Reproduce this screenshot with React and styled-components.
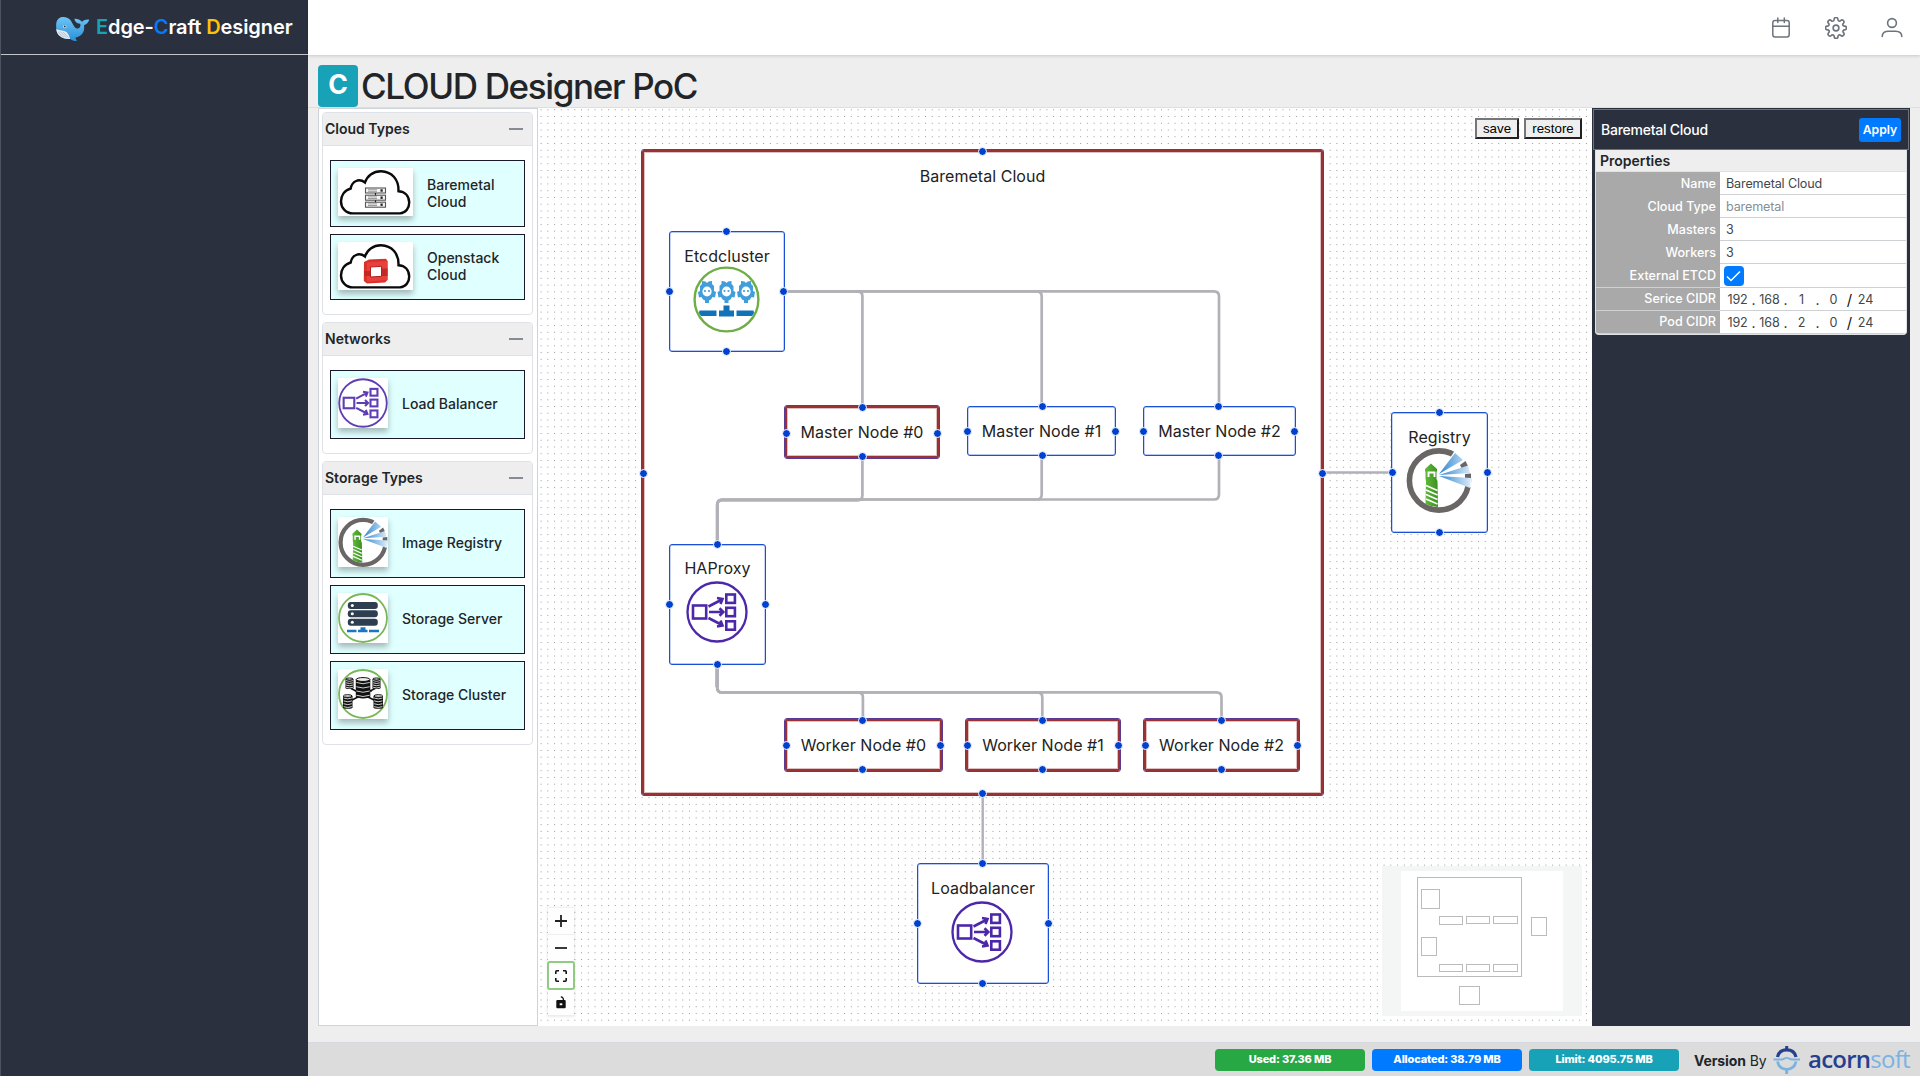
import React from "react";
import styled, { createGlobalStyle } from "styled-components";

const GlobalStyle = createGlobalStyle`
  *, *::before, *::after { box-sizing: border-box; }
  body { margin: 0; background: #eeeeee; color: #212529; font-family: Inter, "Liberation Sans", sans-serif; }
  button { font: inherit; margin: 0; padding: 0; border: 0; cursor: pointer; }
  svg { display: block; }
`;

/* ---------- shell ---------- */

const Shell = styled.div`
  display: grid;
  grid-template-columns: 308px 1fr;
  width: 1920px;
  height: 1076px;
  overflow: hidden;
`;
const Sidebar = styled.aside`
  background: #2a303d;
  border-left: 1px solid #4d535e;
`;
const Brand = styled.div`
  display: flex;
  align-items: center;
  height: 55px;
  padding: 2px 0 0 54px;
  gap: 6px;
  border-bottom: 1px solid #c4c6ca;
`;
const BrandName = styled.div`
  margin-top: -2px;
  color: #fff;
  font-size: 20px;
  font-weight: 600;
  line-height: 24px;
  letter-spacing: -0.1px;
  white-space: nowrap;
`;
const Accent = styled.span`
  color: ${(p) => p.$c};
`;
const Main = styled.div`
  display: flex;
  flex-direction: column;
  min-width: 0;
  background: #eeeeee;
`;
const TopBar = styled.header`
  flex: none;
  height: 55px;
  background: #fff;
  display: flex;
  align-items: center;
  justify-content: flex-end;
  gap: 34px;
  padding: 0 17px 0 0;
  color: #6c757d;
  box-shadow: 0 1px 3px rgba(0, 0, 0, 0.16);
`;
const TitleRow = styled.div`
  flex: none;
  display: flex;
  height: 53px;
  padding: 10px 0 0 10px;
  gap: 3px;
  border-bottom: 1px solid #dcdfe2;
`;
const TitleBadge = styled.span`
  width: 40px;
  height: 42px;
  border-radius: 4px;
  background: #17a2b8;
  color: #fff;
  font-size: 26.5px;
  font-weight: 700;
  line-height: 38px;
  text-align: center;
`;
const Title = styled.h1`
  margin: 0;
  font-size: 35px;
  font-weight: 500;
  line-height: 43px;
  letter-spacing: -1.35px;
  white-space: nowrap;
`;
const Workspace = styled.div`
  flex: none;
  display: grid;
  grid-template-columns: 220px 1054px 318px;
  height: 918px;
  margin: 0 10px;
`;

/* ---------- palette ---------- */

const Palette = styled.div`
  background: #fff;
  border: 1px solid #ced4da;
  padding: 3px;
  display: flex;
  flex-direction: column;
  gap: 7px;
`;
const Group = styled.section`
  width: 211px;
  border: 1px solid #dee2e6;
  border-radius: 4px;
  overflow: hidden;
`;
const GroupHead = styled.div`
  display: flex;
  align-items: center;
  justify-content: space-between;
  height: 33px;
  padding: 0 9px 1px 2px;
  background: #eeeeee;
  border-bottom: 1px solid #dee2e6;
  font-size: 14px;
  font-weight: 600;
`;
const Collapse = styled.span`
  width: 14px;
  height: 2px;
  background: #868c92;
`;
const GroupBody = styled.div`
  display: flex;
  flex-direction: column;
  gap: 7px;
  padding: 14px 7px ${(p) => p.$bottom}px;
`;
const Item = styled.div`
  display: flex;
  align-items: center;
  height: ${(p) => p.$h}px;
  border: 1px solid #1a192b;
  background: #e0ffff;
  padding: 0 20px 0 7px;
`;
const Thumb = styled.div`
  flex: none;
  width: ${(p) => (p.$wide ? 75 : 50)}px;
  height: ${(p) => (p.$wide ? 48 : 50)}px;
  margin: 0 14px 3px 0;
  background: #fff;
  box-shadow: 0 4px 6px rgba(0, 0, 0, 0.28);
`;
const ItemLabel = styled.span`
  width: ${(p) => (p.$wide ? "80px" : "auto")};
  margin-bottom: 2px;
  white-space: ${(p) => (p.$wide ? "normal" : "nowrap")};
  font-size: 14px;
  font-weight: 500;
  line-height: 17px;
  letter-spacing: 0;
`;

/* ---------- canvas ---------- */

const Canvas = styled.div`
  position: relative;
  overflow: hidden;
  background: #fff;
`;
const Dots = styled.svg`
  position: absolute;
  inset: 0;
`;
const Viewport = styled.div`
  position: absolute;
  left: 0;
  top: 0;
  transform: translate(-538px, -108px);
`;
const Edges = styled.svg`
  position: absolute;
  left: 0;
  top: 0;
  fill: none;
  stroke: #b1b1b7;
`;
const Node = styled.div`
  position: absolute;
  left: ${(p) => p.$x}px;
  top: ${(p) => p.$y}px;
  width: ${(p) => p.$w}px;
  height: ${(p) => p.$h}px;
  background: ${(p) => (p.$clear ? "transparent" : "#fff")};
  border: 1px solid ${(p) => (p.$red ? "#5a3a96" : "#1a50d6")};
  border-radius: 3px;
  box-shadow: ${(p) => (p.$red ? "inset 0 0 0 2px #993333, inset 0 0 0 3px #dfc0c0" : "inset 0 0 0 0.4px #6f90e4")};
  display: flex;
  flex-direction: column;
  align-items: center;
  padding-top: ${(p) => p.$pad}px;
`;
const NodeLabel = styled.div`
  font-size: 16px;
  line-height: 20px;
  letter-spacing: 0.05px;
  color: #222;
  white-space: nowrap;
`;
const NodeIcon = styled.div`
  margin: ${(p) => p.$gap}px 1.5px 0 0;
`;
const Port = styled.i`
  position: absolute;
  left: ${(p) => p.$x - 4.5}px;
  top: ${(p) => p.$y - 4.5}px;
  width: 9px;
  height: 9px;
  border: 1px solid #fff;
  border-radius: 50%;
  background: #0041d0;
`;
const Actions = styled.div`
  position: absolute;
  top: 10px;
  right: 10px;
  display: flex;
  gap: 5px;
`;
const NativeButton = styled.button`
  && {
    height: 21px;
    width: ${(p) => p.$w}px;
    border: 2px solid;
    border-color: #767676 #212121 #212121 #767676;
    background: #efefef;
    color: #000;
    font: 13.33px/15px "Liberation Sans", sans-serif;
  }
`;
const Controls = styled.div`
  position: absolute;
  left: 10px;
  bottom: 10px;
  width: 26px;
  box-shadow: 0 0 2px 1px rgba(0, 0, 0, 0.08);
`;
const ControlButton = styled.button`
  && {
    display: flex;
    align-items: center;
    justify-content: center;
    width: 26px;
    height: 27px;
    background: #fefefe;
    border-bottom: 1px solid #eee;
  }
  &&[data-focus="true"] {
    position: relative;
    width: 28px;
    height: 29px;
    margin: -1px;
    border: 2px solid #92ca82;
    border-radius: 3px;
  }
`;
const MiniMap = styled.div`
  position: absolute;
  right: 10px;
  bottom: 10px;
  background: #fff;
`;

/* ---------- properties ---------- */

const Inspector = styled.aside`
  background: #2a303d;
  padding: 1px;
`;
const InspectorHead = styled.div`
  display: flex;
  align-items: center;
  justify-content: space-between;
  height: 41px;
  border: 1px solid #6f7278;
  padding: 0 7px 0 7px;
  color: #fff;
  font-size: 14px;
  font-weight: 500;
  letter-spacing: -0.25px;
`;
const Apply = styled.button`
  && {
    width: 42px;
    height: 24px;
    border-radius: 3px;
    background: #007bff;
    color: #fff;
    font-size: 12.2px;
    font-weight: 600;
  }
`;
const PropCard = styled.div`
  margin: 0 2px;
  height: 185px;
  border: 1px solid #dee2e6;
  border-top: 0;
  border-radius: 0 0 4px 4px;
  background: #fff;
  overflow: hidden;
`;
const PropTitle = styled.div`
  height: 22px;
  padding-left: 4px;
  background: #eeeeee;
  border-bottom: 1px solid #dee2e6;
  font-size: 14px;
  font-weight: 600;
  line-height: 22px;
`;
const PropRow = styled.div`
  display: grid;
  grid-template-columns: 124px 1fr;
  height: ${(p) => p.$h}px;
  border-bottom: 1px solid #ced1d4;
  font-size: 12.6px;
  line-height: ${(p) => p.$line ?? 23}px;
`;
const PropName = styled.div`
  padding-right: 4px;
  background: #a9a9a9;
  color: #fff;
  font-weight: 500;
  text-align: right;
`;
const PropValue = styled.div`
  padding-left: ${(p) => p.$left ?? 6}px;
  color: ${(p) => (p.$muted ? "#868e96" : "#41474d")};
  letter-spacing: -0.15px;
  display: flex;
  align-items: center;
`;
const Check = styled.span`
  width: 20px;
  height: 20px;
  border-radius: 4px;
  background: #007bff;
`;
const Octet = styled.span`
  width: ${(p) => p.$w}px;
  text-align: center;
`;
const Sep = styled.span`
  width: 11px;
  text-align: center;
  color: #111;
  font-size: ${(p) => (p.$slash ? 15 : 14)}px;
`;

/* ---------- footer ---------- */

const Footer = styled.footer`
  flex: none;
  margin-top: 16px;
  height: 34px;
  background: #dcdcdc;
  border-top: 1px solid #d6d9e0;
  display: flex;
  align-items: center;
  justify-content: flex-end;
  gap: 7px;
  padding-right: 20px;
`;
const Stat = styled.span`
  width: 150px;
  height: 22px;
  border-radius: 4px;
  background: ${(p) => p.$c};
  color: #fff;
  font-size: 11px;
  font-weight: 800;
  line-height: 21px;
  text-align: center;
  letter-spacing: -0.15px;
`;
const Version = styled.span`
  margin: 2px 0 0 8px;
  width: 72px;
  font-size: 14px;
  letter-spacing: -0.1px;
  white-space: nowrap;
`;
const Acorn = styled.span`
  display: flex;
  align-items: center;
  gap: 7px;
  height: 32px;
`;
const AcornName = styled.span`
  width: 92px;
  font: 600 24px/28px "Open Sans", sans-serif;
  letter-spacing: -0.75px;
  color: #25408f;
  white-space: nowrap;
  margin-top: -2px;
`;
const Light = styled.span`
  font-weight: 400;
  color: #7ab2e2;
`;

/* ---------- drawings ---------- */

const Whale = () => (
  <svg width="35" height="25" viewBox="0 0 36 26">
    <defs>
      <linearGradient id="wh" x1="0" y1="0" x2="0" y2="1">
        <stop offset="0" stopColor="#6cc5f5" />
        <stop offset="1" stopColor="#2b8fd6" />
      </linearGradient>
    </defs>
    <path d="M1 8C2 1 8 0 13 2C18 4 18.500 12 22.500 13C25.500 13 27 10.500 26 8C23 8 20.500 6 20 3C23 2.800 26 4 28 6C30 3.800 33 3.200 35.500 3.800C34.500 7 32 9 30 9.500C31 16 28 21 21 22.500L22.500 26C19.500 26 17 25 15.500 23.800C8 25 0 20 1 8Z" fill="url(#wh)" />
    <path d="M1 13.500C5 15.500 9 14.500 12 17C14 19 15 21.500 15.500 23.800C8 24.500 1.500 20.500 1 13.500Z" fill="#e3eaf0" />
    <path d="M3 16.500L9 22.500M5 16L11.500 22.500M8 16.500L14 22.500" stroke="#a7b6c2" strokeWidth=".8" />
    <circle cx="10" cy="11" r="1.700" fill="#eef" />
    <circle cx="10" cy="11" r="1" fill="#2a303d" />
  </svg>
);

const CalendarIcon = () => (
  <svg width="20" height="22" viewBox="0 0 20 22" fill="none" stroke="currentColor" strokeWidth="1.500" strokeLinecap="round">
    <rect x="1.800" y="3.600" width="16.400" height="16.400" rx="2.200" />
    <path d="M1.800 9.200H18.200M6.800 1V5.600M13.300 1V5.600" />
  </svg>
);
const GearIcon = () => (
  <svg width="22" height="22" viewBox="0.500 0.500 23 23" fill="none" stroke="currentColor" strokeWidth="1.700" strokeLinejoin="round">
    <circle cx="12" cy="12" r="3" />
    <path d="M19.400 15a1.650 1.650 0 0 0 .33 1.820l.06.06a2 2 0 0 1-2.830 2.830l-.06-.06a1.650 1.650 0 0 0-2.820 1.170V21a2 2 0 0 1-4 0v-.09a1.650 1.650 0 0 0-2.900-1.180l-.06.06a2 2 0 0 1-2.830-2.830l.06-.06A1.650 1.650 0 0 0 3.170 14H3a2 2 0 0 1 0-4h.09A1.650 1.650 0 0 0 4.270 7.180l-.06-.06a2 2 0 0 1 2.830-2.830l.06.06A1.650 1.650 0 0 0 10 3.170V3a2 2 0 0 1 4 0v.09a1.650 1.650 0 0 0 2.820 1.170l.06-.06a2 2 0 0 1 2.830 2.830l-.06.06A1.650 1.650 0 0 0 20.830 10H21a2 2 0 0 1 0 4h-.09a1.650 1.650 0 0 0-1.510 1z" />
  </svg>
);
const UserIcon = () => (
  <svg width="22" height="22" viewBox="0 0 22 22" fill="none" stroke="currentColor" strokeWidth="1.600" strokeLinecap="round">
    <circle cx="11" cy="6" r="4.400" />
    <path d="M1.200 19.500C1.200 15.500 4 14.200 7.500 14.200H14.500C18 14.200 20.800 15.500 20.800 19.500" />
  </svg>
);

const CloudShape = () => (
  <path d="M15 45.400H62C68 45 71.200 40 71.200 34.500C71 28 67 23.500 60.500 23.200C61 12 54 3.400 43 3.200C35 3.200 29 8 27 14.500C21 10 14 13 12.700 20.500C6 22.500 3 28 3 33.500C3 40 8 45.400 15 45.400Z" fill="#fff" stroke="#0a0a0a" strokeWidth="2.400" />
);
const BaremetalArt = () => (
  <svg width="75" height="48" viewBox="0 0 75 48">
    <CloudShape />
    {[20, 27.200, 34.200].map((y) => (
      <g key={y}>
        <rect x="27.500" y={y} width="20" height="5" fill="#f4f4f4" stroke="#555" strokeWidth="1.100" />
        <path d={`M30 ${y + 1.700}H39M30 ${y + 3.300}H39`} stroke="#888" strokeWidth=".8" />
        <rect x="42.500" y={y + 1.300} width="2.200" height="2.400" fill="#222" />
      </g>
    ))}
    <path d="M37.500 25V27.200M37.500 32.200V34.200" stroke="#222" strokeWidth="1.200" />
  </svg>
);
const OpenstackArt = () => (
  <svg width="75" height="48" viewBox="0 0 75 48">
    <CloudShape />
    <path d="M26 20L31 17.500L48 16.800L49.500 19V38L47 40.500L29 41.500L25.800 39Z" fill="#d9322b" />
    <path d="M29 20.500L49.500 19V38L29 39.500Z" fill="#e8403c" />
    <path d="M26 29H32V34H26ZM44 26.500H49.500V34H44Z" fill="#c42822" />
    <path d="M32.500 25L43.500 24.300V34.300L32.500 35Z" fill="#fff" stroke="#b3201b" strokeWidth="1" />
  </svg>
);

const BalancerArt = ({ size, stroke = "#4d27aa" }) => (
  <svg width={size} height={size} viewBox="0 0 62 62" fill="none" stroke={stroke} strokeWidth="2.600">
    <circle cx="31" cy="31" r="29.500" strokeWidth="2.300" />
    <rect x="7" y="24.500" width="13.200" height="13" />
    <rect x="40.300" y="13.500" width="8.600" height="8.400" />
    <rect x="40.300" y="26.800" width="8.600" height="8.400" />
    <rect x="40.300" y="40.300" width="8.600" height="8.400" />
    <path d="M23 31H37M22.500 25.500L36 18.500M22.500 37L36 44M33.500 27.300L37.300 31L33.500 34.700M31 17L36.500 18L34.500 23M31 45.500L36.500 44.500L34.500 39.500" />
  </svg>
);
const RegistryArt = ({ size, id }) => (
  <svg width={size} height={size} viewBox="0 0 66 66">
    <defs>
      <linearGradient id={`beam${id}`} x1="0" x2="1">
        <stop offset="0" stopColor="#2f86d0" />
        <stop offset="1" stopColor="#dcecf9" />
      </linearGradient>
      <linearGradient id={`tower${id}`} x1="0" x2="1">
        <stop offset="0" stopColor="#62bb3a" />
        <stop offset="1" stopColor="#3b8f22" />
      </linearGradient>
    </defs>
    <circle cx="33" cy="33.500" r="29.600" fill="#fff" stroke="#6b6666" strokeWidth="5.600" />
    <path d="M33 27L50 2L64 4L66 41Z" fill="#fff" />
    <path d="M54 18L59.500 14L62 19L56 22ZM59 27L65 26.500V31.500L59 31.500Z" fill="#6b6666" />
    <path d="M33 27L49 6L57 13ZM33 28L62 18.500L64 26ZM33 29L65 31L64 41Z" fill={`url(#beam${id})`} />
    <path d="M25 16.500L31 22V24.500H30.500V32L31.500 34L32 60Q26 60 19.500 57L20 34L19.500 32V24.500H19V22Z" fill={`url(#tower${id})`} />
    <path d="M22.500 30V25.500H28.500V30" fill="none" stroke="#fff" strokeWidth="1.900" />
    <path d="M20 38.500L31.500 43.500M20 43L31.500 48M20 47.500L31.500 52.500M20 52L31.500 57" stroke="#fff" strokeWidth="1.500" />
  </svg>
);
const Ring = () => <circle cx="25" cy="25" r="24" fill="#fff" stroke="#78b858" strokeWidth="1.800" />;
const ServerArt = () => (
  <svg width="50" height="50" viewBox="0 0 50 50">
    <Ring />
    {[9, 17.300, 25.800].map((y) => (
      <g key={y}>
        <rect x="9.800" y={y} width="30" height="6.900" rx="3" fill="#2d3e50" />
        <circle cx="14.300" cy={y + 3.400} r="1.500" fill="#fff" />
      </g>
    ))}
    <path d="M9 38H18.500M31 38H41M20 38H29.500M25 35V38" stroke="#1b76c0" strokeWidth="2.700" />
    <rect x="22.500" y="34.300" width="5" height="4" fill="#1b76c0" />
  </svg>
);
const Drum = ({ x, y, w, h, n }) => {
  const step = h / n;
  return (
    <g>
      <rect x={x} y={y} width={w} height={h} fill="#111" />
      <ellipse cx={x + w / 2} cy={y + h} rx={w / 2} ry={step / 2.200} fill="#111" />
      {Array.from({ length: n }, (_, i) => (
        <path key={i} d={`M${x + 0.6} ${y + step * (i + 0.7)}Q${x + w / 2} ${y + step * (i + 1.3)} ${x + w - 0.6} ${y + step * (i + 0.7)}`} stroke="#fff" strokeWidth=".8" fill="none" />
      ))}
      <ellipse cx={x + w / 2} cy={y} rx={w / 2 - 0.4} ry={step / 2.200} fill="#eee" stroke="#111" strokeWidth="1" />
    </g>
  );
};
const ClusterArt = () => (
  <svg width="50" height="50" viewBox="0 0 50 50">
    <Ring />
    <path d="M12 19L38 32M38 19L12 32M17 22L25 20L34 22" stroke="#111" strokeWidth="1.400" />
    <Drum x={7.500} y={10} w={8} h={9} n={4} />
    <Drum x={34.500} y={10} w={8} h={9} n={4} />
    <Drum x={17.800} y={10.500} w={14.500} h={17} n={4} />
    <Drum x={5} y={27} w={9.500} h={11.500} n={4} />
    <Drum x={35.500} y={27} w={9.500} h={11.500} n={4} />
  </svg>
);
const EtcdArt = () => (
  <svg width="67" height="67" viewBox="0 0 67 67">
    <circle cx="33.500" cy="33.500" r="31.900" fill="#fff" stroke="#6fae45" strokeWidth="2.400" />
    {[14, 33.500, 53].map((x) => (
      <g key={x}>
        <path d={`M${x - 5} 15L${x - 1.500} 15.500L${x} 17L${x + 1.500} 15.500L${x + 5} 15L${x + 5} 18L${x + 7} 20V25L${x + 9} 26L${x + 8} 31.500L${x + 5.500} 31L${x + 4} 33.500L${x + 2} 34.500V37H${x - 2}V34.500L${x - 4} 33.500L${x - 5.500} 31L${x - 8} 31.500L${x - 9} 26L${x - 7} 25V20L${x - 5} 18Z`} fill="#419eda" />
        <ellipse cx={x} cy="25.500" rx="4.600" ry="5.100" fill="#fff" />
        <circle cx={x - 2} cy="25" r="1.100" fill="#419eda" />
        <circle cx={x + 2} cy="25" r="1.100" fill="#419eda" />
      </g>
    ))}
    <path d="M6.500 44.500H23.500V50H8L6 47ZM43.500 44.500H60.500L61 47L59 50H43.500ZM26 44.500H30.500V39.500H36.500V44.500H41V50.500H26Z" fill="#1272b8" />
  </svg>
);
const AcornLogo = () => (
  <svg width="28" height="30" viewBox="0 0 28 30" fill="none">
    <path d="M13.700 1V4.500" stroke="#25408f" strokeWidth="3" />
    <path d="M4.500 12C5.500 7.500 9 4.800 13.700 4.800C18.500 4.800 22 7.500 23 12" stroke="#25408f" strokeWidth="3.200" />
    <path d="M.5 14.500H8.500C11 14.500 11.500 12.800 13.700 12.800C16 12.800 16.500 14.500 19 14.500H27" stroke="#7ab2e2" strokeWidth="1.800" />
    <path d="M4.500 16.500C5.500 21.500 9 24.300 13.700 24.300C18.500 24.300 22 21.500 23 16.500" stroke="#7ab2e2" strokeWidth="2.800" />
    <path d="M13.700 24V29" stroke="#7ab2e2" strokeWidth="3" />
  </svg>
);

/* ---------- data ---------- */

const PALETTE = [
  {
    title: "Cloud Types",
    bottom: 14,
    items: [
      { label: "Baremetal Cloud", wide: true, h: 67, art: <BaremetalArt /> },
      { label: "Openstack Cloud", wide: true, h: 66, art: <OpenstackArt /> },
    ],
  },
  { title: "Networks", bottom: 14, items: [{ label: "Load Balancer", h: 69, art: <BalancerArt size={50} stroke="#5f3db5" /> }] },
  {
    title: "Storage Types",
    bottom: 14,
    items: [
      { label: "Image Registry", h: 69, art: <RegistryArt size={50} id="p" /> },
      { label: "Storage Server", h: 69, art: <ServerArt /> },
      { label: "Storage Cluster", h: 69, art: <ClusterArt /> },
    ],
  },
];

const NODES = [
  { label: "Baremetal Cloud", x: 641, y: 149, w: 683, h: 647, pad: 16, red: true, clear: true },
  { label: "Etcdcluster", x: 669, y: 231, w: 116, h: 121, pad: 14, gap: 0, art: <EtcdArt /> },
  { label: "Master Node #0", x: 784, y: 405, w: 156, h: 54, pad: 16, red: true },
  { label: "Master Node #1", x: 967, y: 406, w: 149, h: 50, pad: 14 },
  { label: "Master Node #2", x: 1143, y: 406, w: 153, h: 50, pad: 14 },
  { label: "HAProxy", x: 669, y: 544, w: 97, h: 121, pad: 13, gap: 3, art: <BalancerArt size={62} /> },
  { label: "Worker Node #0", x: 784, y: 718, w: 159, h: 54, pad: 16, red: true },
  { label: "Worker Node #1", x: 965, y: 718, w: 156, h: 54, pad: 16, red: true },
  { label: "Worker Node #2", x: 1143, y: 718, w: 157, h: 54, pad: 16, red: true },
  { label: "Registry", x: 1391, y: 412, w: 97, h: 121, pad: 14, gap: 0, art: <RegistryArt size={66} id="n" /> },
  { label: "Loadbalancer", x: 917, y: 863, w: 132, h: 121, pad: 14, gap: 3, art: <BalancerArt size={62} /> },
];

const PORTS = [
  [982.7, 151.7], [643.6, 473.3], [1322, 473.3], [982.7, 793.5],
  [726.5, 231.3], [669.3, 291.3], [783.8, 291.3], [726.5, 351.3],
  [862.5, 407.8], [786.5, 433], [937.5, 433], [862.5, 456.6],
  [1042, 406.5], [967.2, 431.6], [1115.5, 431.6], [1042, 455.2],
  [1218.6, 406.5], [1143.8, 431.6], [1294.8, 431.6], [1218.6, 455.2],
  [717.2, 544], [669.2, 604], [765, 604], [717.2, 664],
  [862.7, 720.5], [786.6, 745.6], [940.2, 745.6], [862.7, 769.3],
  [1042, 720.5], [967, 745.6], [1118.2, 745.6], [1042, 769.3],
  [1221.3, 720.5], [1145.2, 745.6], [1297.5, 745.6], [1221.3, 769.3],
  [1439.8, 412.6], [1392, 472.6], [1487.6, 472.6], [1439.8, 532.6],
  [982.9, 863.6], [917.3, 923.6], [1048, 923.6], [982.9, 983.7],
];

const MASTER_X = [862.4, 1041.7, 1219];
const WORKER_X = [862.9, 1042.3, 1221.5];

const MINI = [
  [417.5, 877.5, 104, 99], [421.5, 889.5, 18, 19], [439.5, 916.5, 23, 8], [466.5, 916.5, 23, 7], [493.5, 916.5, 24, 7],
  [421.5, 937.5, 15, 18], [439.5, 964.5, 23, 7], [466.5, 964.5, 23, 7], [493.5, 964.5, 24, 7], [531.5, 917.5, 15, 18], [459.5, 986.5, 20, 18],
];

const PROPS = [
  { name: "Name", value: "Baremetal Cloud", h: 23 },
  { name: "Cloud Type", value: "baremetal", muted: true, h: 23 },
  { name: "Masters", value: "3", h: 23 },
  { name: "Workers", value: "3", h: 23 },
  { name: "External ETCD", check: true, h: 24 },
  { name: "Serice CIDR", cidr: [192, 168, 1, 0, 24], h: 23, line: 21 },
  { name: "Pod CIDR", cidr: [192, 168, 2, 0, 24], h: 23, line: 21 },
];

const Cidr = ({ v }) => (
  <>
    <Octet $w={21}>{v[0]}</Octet><Sep>.</Sep>
    <Octet $w={21}>{v[1]}</Octet><Sep>.</Sep>
    <Octet $w={21}>{v[2]}</Octet><Sep>.</Sep>
    <Octet $w={21}>{v[3]}</Octet><Sep $slash>/</Sep>
    <Octet $w={21}>{v[4]}</Octet>
  </>
);

const Flow = () => (
  <Canvas>
    <Dots width="1054" height="918">
      <pattern id="grid" x="-0.3" y="-1.600" width="6.744" height="6.744" patternUnits="userSpaceOnUse">
        <circle cx="3.400" cy="3.400" r=".55" fill="#81818a" />
      </pattern>
      <rect width="1054" height="918" fill="url(#grid)" />
      <rect x="103.500" y="41.500" width="682" height="646" rx="3" fill="#fff" />
    </Dots>
    <Viewport>
      <Edges width="1920" height="1076">
        <g strokeWidth="2.700">
          {MASTER_X.map((x) => (
            <path key={x} d={`M784 291.300H${x - 5}Q${x} 291.300 ${x} 296.300V406`} />
          ))}
          {MASTER_X.slice(1).map((x) => (
            <path key={x} d={`M${x} 456V494.500Q${x} 499.500 ${x - 5} 499.500H722.500Q717.500 499.500 717.500 504.500V544`} />
          ))}
          <path d="M862.400 458V495.300Q862.400 500.300 857.400 500.300H722Q717 500.300 717 505.300V544" />
          {WORKER_X.map((x) => (
            <path key={x} d={`M717.200 664V687.400Q717.200 692.400 722.200 692.400H${x - 5}Q${x} 692.400 ${x} 697.400V719`} />
          ))}
          <path d="M717 664V687" strokeWidth="3.500" />
          <path d="M1322 472.500H1392M982.700 793V864" strokeWidth="2.400" />
        </g>
      </Edges>
      {NODES.map((n) => (
        <Node key={n.label + n.x} $x={n.x} $y={n.y} $w={n.w} $h={n.h} $pad={n.pad} $red={n.red} $clear={n.clear}>
          <NodeLabel>{n.label}</NodeLabel>
          {n.art && <NodeIcon $gap={n.gap}>{n.art}</NodeIcon>}
        </Node>
      ))}
      {PORTS.map(([x, y]) => (
        <Port key={`${x}-${y}`} $x={x} $y={y} />
      ))}
    </Viewport>
    <Actions>
      <NativeButton $w={44}>save</NativeButton>
      <NativeButton $w={58}>restore</NativeButton>
    </Actions>
    <Controls>
      <ControlButton>
        <svg width="12" height="12" viewBox="0 0 12 12"><path d="M6 0V12M0 6H12" stroke="#222" strokeWidth="1.800" /></svg>
      </ControlButton>
      <ControlButton>
        <svg width="12" height="12" viewBox="0 0 12 12"><path d="M0 6H12" stroke="#222" strokeWidth="1.800" /></svg>
      </ControlButton>
      <ControlButton data-focus="true">
        <svg width="12" height="12" viewBox="0 0 12 12" fill="none" stroke="#111" strokeWidth="1.600">
          <path d="M.8 4V1.800Q.8 .8 1.800 .8H4M8 .8H10.200Q11.200 .8 11.200 1.800V4M11.200 8V10.200Q11.200 11.200 10.200 11.200H8M4 11.200H1.800Q.8 11.200 .8 10.200V8" />
        </svg>
      </ControlButton>
      <ControlButton>
        <svg width="10" height="13" viewBox="0 0 10 13">
          <rect x=".3" y="4" width="9.400" height="8.200" rx="1" fill="#111" />
          <path d="M4.800 .8Q7.500 1 7.500 4.500" fill="none" stroke="#111" strokeWidth="1.300" />
          <rect x="3.700" y="7.300" width="2.600" height="1.900" fill="#fff" />
        </svg>
      </ControlButton>
    </Controls>
    <MiniMap>
      <svg width="200" height="150" viewBox="1382 866 200 150">
        <rect x="1382" y="866" width="200" height="150" fill="#f4f6f6" />
        <rect x="1401" y="871" width="162" height="140" fill="#fff" />
        {MINI.map(([x, y, w, h]) => (
          <rect key={`${x}-${y}`} x={x + 1000} y={y} width={w} height={h} fill="#fff" stroke="#bbb" />
        ))}
      </svg>
    </MiniMap>
  </Canvas>
);

export default function App() {
  return (
    <>
      <GlobalStyle />
      <Shell>
        <Sidebar>
          <Brand>
            <Whale />
            <BrandName>
              <Accent $c="#17a2b8">E</Accent>dge-<Accent $c="#007bff">C</Accent>raft <Accent $c="#ffc107">D</Accent>esigner
            </BrandName>
          </Brand>
        </Sidebar>
        <Main>
          <TopBar>
            <CalendarIcon />
            <GearIcon />
            <UserIcon />
          </TopBar>
          <TitleRow>
            <TitleBadge>C</TitleBadge>
            <Title>CLOUD Designer PoC</Title>
          </TitleRow>
          <Workspace>
            <Palette>
              {PALETTE.map((g) => (
                <Group key={g.title}>
                  <GroupHead>{g.title}<Collapse /></GroupHead>
                  <GroupBody $bottom={g.bottom}>
                    {g.items.map((it) => (
                      <Item key={it.label} $h={it.h}>
                        <Thumb $wide={it.wide}>{it.art}</Thumb>
                        <ItemLabel $wide={it.wide}>{it.label}</ItemLabel>
                      </Item>
                    ))}
                  </GroupBody>
                </Group>
              ))}
            </Palette>
            <Flow />
            <Inspector>
              <InspectorHead>Baremetal Cloud<Apply>Apply</Apply></InspectorHead>
              <PropCard>
                <PropTitle>Properties</PropTitle>
                {PROPS.map((p) => (
                  <PropRow key={p.name} $h={p.h} $line={p.line}>
                    <PropName>{p.name}</PropName>
                    <PropValue $muted={p.muted} $left={p.check ? 4 : p.cidr ? 7 : undefined}>
                      {p.value}
                      {p.check && (
                        <Check>
                          <svg width="20" height="20" viewBox="0 0 20 20"><path d="M3 10.500L7 14.500L16 5.500" fill="none" stroke="#fff" strokeWidth="1.500" /></svg>
                        </Check>
                      )}
                      {p.cidr && <Cidr v={p.cidr} />}
                    </PropValue>
                  </PropRow>
                ))}
              </PropCard>
            </Inspector>
          </Workspace>
          <Footer>
            <Stat $c="#28a745">Used: 37.36 MB</Stat>
            <Stat $c="#007bff">Allocated: 38.79 MB</Stat>
            <Stat $c="#17a2b8">Limit: 4095.75 MB</Stat>
            <Version><b>Version</b> By</Version>
            <Acorn>
              <AcornLogo />
              <AcornName>acorn<Light>soft</Light></AcornName>
            </Acorn>
          </Footer>
        </Main>
      </Shell>
    </>
  );
}
